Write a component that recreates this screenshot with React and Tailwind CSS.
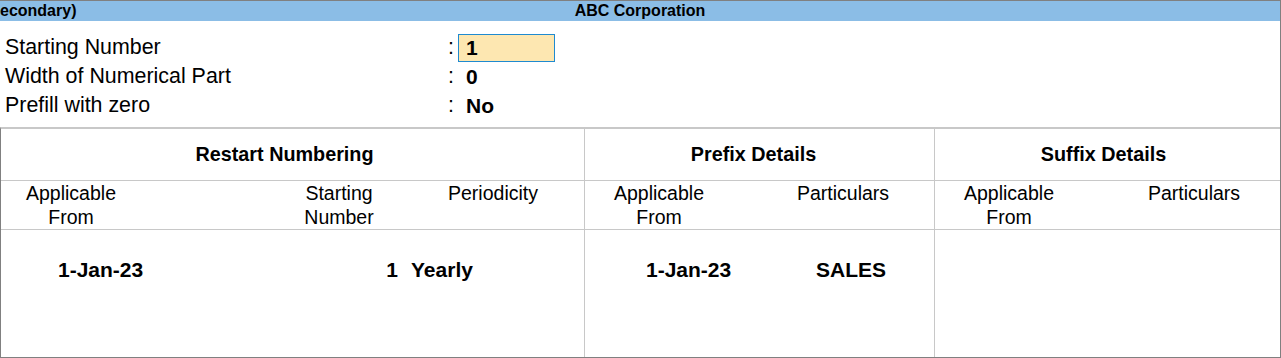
import React from 'react';

const fields = [
  { label: 'Starting Number', value: '1', active: true },
  { label: 'Width of Numerical Part', value: '0' },
  { label: 'Prefill with zero', value: 'No' },
];

const TwoLine = ({ top, bottom }) => (
  <>
    <span className="block">{top}</span>
    {bottom && <span className="block">{bottom}</span>}
  </>
);

const App = () => {
  return (
    <div className="w-[1281px] h-[358px] bg-white text-black border-t border-r border-b border-[#808080] flex flex-col font-['Liberation_Sans',Arial,sans-serif] overflow-hidden">
      {/* Title bar */}
      <div className="h-[20px] shrink-0 bg-[#8bbde6] grid grid-cols-[1fr_auto_1fr] text-[16px] font-bold leading-[20px] whitespace-nowrap">
        <span className="overflow-hidden">econdary)</span>
        <span>ABC Corporation</span>
        <span></span>
      </div>

      {/* Numbering fields */}
      <div className="h-[106px] shrink-0 pt-[12px] pl-[5px] text-[21.4px] leading-[29px]">
        {fields.map((f) => (
          <div key={f.label} className="flex items-center h-[29px]">
            <span className="w-[443px] shrink-0">{f.label}</span>
            <span className="w-[10px] shrink-0">:</span>
            {f.active ? (
              <span className="w-[97px] h-[28px] border border-[#1f8ad0] bg-[#fde7b1] pl-[7px] flex items-center font-bold text-[21px]">
                {f.value}
              </span>
            ) : (
              <span className="pl-[8px] font-bold text-[21px]">{f.value}</span>
            )}
          </div>
        ))}
      </div>

      {/* Details table */}
      <div className="flex-1 flex border-t-2 border-l border-t-[#c8c8c8] border-l-[#808080]">
        {/* Restart Numbering */}
        <div className="w-[584px] shrink-0 flex flex-col border-r border-[#c8c8c8]">
          <div className="h-[52px] shrink-0 border-b border-[#c8c8c8] flex items-center justify-center pr-[16px] text-[19.8px] font-bold">
            Restart Numbering
          </div>
          <div className="h-[49px] shrink-0 border-b border-[#c8c8c8] flex text-[19.5px] leading-[24px]">
            <div className="w-[140px] text-center"><TwoLine top="Applicable" bottom="From" /></div>
            <div className="ml-[148px] w-[100px] text-center"><TwoLine top="Starting" bottom="Number" /></div>
            <div className="ml-[44px] w-[120px] text-center">Periodicity</div>
          </div>
          <div className="flex-1 flex pt-[28px] text-[21px] font-bold leading-[24px]">
            <div className="w-[200px] pl-[57px]">1-Jan-23</div>
            <div className="w-[197px] text-right">1</div>
            <div className="pl-[13px]">Yearly</div>
          </div>
        </div>

        {/* Prefix Details */}
        <div className="w-[350px] shrink-0 flex flex-col border-r border-[#c8c8c8]">
          <div className="h-[52px] shrink-0 border-b border-[#c8c8c8] flex items-center justify-center pr-[12px] text-[19.8px] font-bold">
            Prefix Details
          </div>
          <div className="h-[49px] shrink-0 border-b border-[#c8c8c8] flex text-[19.5px] leading-[24px]">
            <div className="w-[148px] text-center"><TwoLine top="Applicable" bottom="From" /></div>
            <div className="ml-[50px] w-[120px] text-center">Particulars</div>
          </div>
          <div className="flex-1 flex pt-[28px] text-[21px] font-bold leading-[24px]">
            <div className="w-[200px] pl-[61px]">1-Jan-23</div>
            <div className="pl-[31px]">SALES</div>
          </div>
        </div>

        {/* Suffix Details */}
        <div className="flex-1 flex flex-col">
          <div className="h-[52px] shrink-0 border-b border-[#c8c8c8] flex items-center justify-center pr-[8px] text-[19.8px] font-bold">
            Suffix Details
          </div>
          <div className="h-[49px] shrink-0 border-b border-[#c8c8c8] flex text-[19.5px] leading-[24px]">
            <div className="w-[148px] text-center"><TwoLine top="Applicable" bottom="From" /></div>
            <div className="ml-[51px] w-[120px] text-center">Particulars</div>
          </div>
          <div className="flex-1"></div>
        </div>
      </div>
    </div>
  );
};

export default App;
